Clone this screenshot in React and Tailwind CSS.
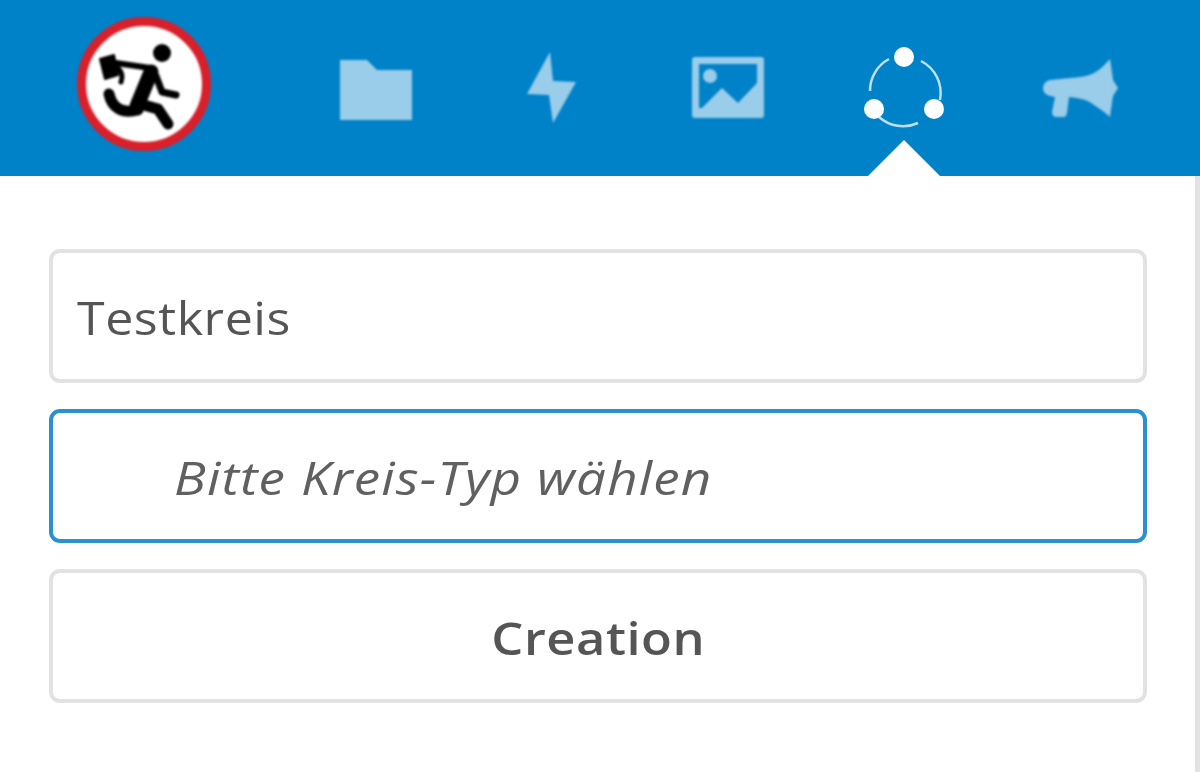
import React from 'react';

const Logo = () => (
  <svg viewBox="0 0 288 176" className="w-[288px] h-[176px] blur-[1px]">
    <circle cx="144" cy="84" r="62.5" fill="#fff" stroke="#d81f2a" strokeWidth="9" />
    <circle cx="162" cy="53" r="9" fill="#000" />
    <path d="M100 59 L114 55 L118 75 L105 79 Z" fill="#000" stroke="#000" strokeWidth="2" strokeLinejoin="round" />
    <g fill="none" stroke="#000" strokeLinecap="round" strokeLinejoin="round">
      <path d="M116 63 L150 68" strokeWidth="6" />
      <path d="M118 68 Q124 74 121 82" strokeWidth="5" />
      <path d="M151 72 L137 106" strokeWidth="15" />
      <path d="M109 94 C112 108 122 114 138 110" strokeWidth="11" />
      <path d="M140 104 L158 109 L168 124" strokeWidth="11" />
      <path d="M156 76 L162 92 L176 95" strokeWidth="7" />
    </g>
  </svg>
);

const FolderIcon = () => (
  <svg viewBox="0 0 176 176" className="w-[176px] h-[176px] blur-[0.8px]">
    <path d="M52 60 H79 L89 70 H124 V120 H52 Z" fill="#fff" fillOpacity="0.6" />
  </svg>
);

const BoltIcon = () => (
  <svg viewBox="0 0 176 176" className="w-[176px] h-[176px] blur-[0.8px]">
    <path d="M86 52 L63 94 L85 95 L89 123 L112 82 L89 81 Z" fill="#fff" fillOpacity="0.6" />
  </svg>
);

const ImageIcon = () => (
  <svg viewBox="0 0 176 176" className="w-[176px] h-[176px] blur-[0.8px]">
    <path
      fillRule="evenodd"
      d="M55 57 H121 Q124 57 124 60 V115 Q124 118 121 118 H55 Q52 118 52 115 V60 Q52 57 55 57 Z M59 64 V108 L62 108 L82 88 L98 103 L117 83 V64 Z"
      fill="#fff"
      fillOpacity="0.6"
    />
    <circle cx="70" cy="76" r="7" fill="#fff" fillOpacity="0.6" />
  </svg>
);

const CirclesIcon = () => (
  <svg viewBox="0 0 176 176" className="w-[176px] h-[176px] blur-[0.6px]">
    <g fill="none" stroke="#fff" strokeOpacity="0.75" strokeWidth="2.5">
      <path d="M54 91 A36 36 0 0 1 73 59" />
      <path d="M105 61 A36 36 0 0 1 124 100" />
      <path d="M63 117 A36 36 0 0 0 102 123" />
    </g>
    <circle cx="88" cy="57" r="10" fill="#fff" />
    <circle cx="58" cy="109" r="10" fill="#fff" />
    <circle cx="118" cy="109" r="10" fill="#fff" />
  </svg>
);

const MegaphoneIcon = () => (
  <svg viewBox="0 0 176 176" className="w-[176px] h-[176px] blur-[0.8px]">
    <path
      d="M118 59 C110 68 102 76 88 77 C78 78 66 79 58 80 Q51 82 51 88 Q51 94 58 96 L63 97 L60 112 Q60 117 65 117 H72 Q74 117 75 113 L77 97 C88 98 96 100 102 105 C108 109 114 113 118 117 C119 110 120 102 121 96 L126 88 L121 80 C120 72 119 66 118 59 Z"
      fill="#fff"
      fillOpacity="0.6"
    />
  </svg>
);

const App = () => {
  return (
    <div className="w-[1200px] h-[772px] overflow-hidden bg-white flex flex-col font-['Open_Sans',sans-serif] text-[#555]">
      {/* Header */}
      <div className="h-[176px] shrink-0 bg-[#0082c9] flex relative">
        <Logo />
        <FolderIcon />
        <BoltIcon />
        <ImageIcon />
        <CirclesIcon />
        <MegaphoneIcon />
        <div className="absolute left-[868px] bottom-0 w-0 h-0 border-l-[36px] border-r-[36px] border-b-[36px] border-l-transparent border-r-transparent border-b-white" />
      </div>

      <div className="flex-1 flex">
        <div className="flex-1 pt-[73px] pl-[49px] pr-[48px] flex flex-col gap-[26px] blur-[0.6px]">
          <div className="w-full h-[134px] rounded-[11px] border-[4px] border-[#e2e2e2] bg-white pl-[24px] pt-[3px] flex items-center text-[46px] text-[#555]">
            <span className="inline-block origin-left scale-x-[1.09] tracking-[0.5px]">Testkreis</span>
          </div>
          <div className="w-full h-[134px] rounded-[11px] border-[4px] border-[#2a90d0] bg-white pl-[121px] pt-[3px] flex items-center text-[46px] italic text-[#606060]">
            <span className="inline-block origin-left scale-x-[1.15] tracking-[1px]">Bitte Kreis-Typ wählen</span>
          </div>
          <button className="w-full h-[134px] rounded-[11px] border-[4px] border-[#e2e2e2] bg-white pt-[2px] text-[46px] font-semibold text-[#555]">
            <span className="inline-block scale-x-[1.1] tracking-[0.5px]">Creation</span>
          </button>
        </div>
        {/* scrollbar */}
        <div className="w-[5px] bg-[#e2e2e2]" />
      </div>
    </div>
  );
};

export default App;
